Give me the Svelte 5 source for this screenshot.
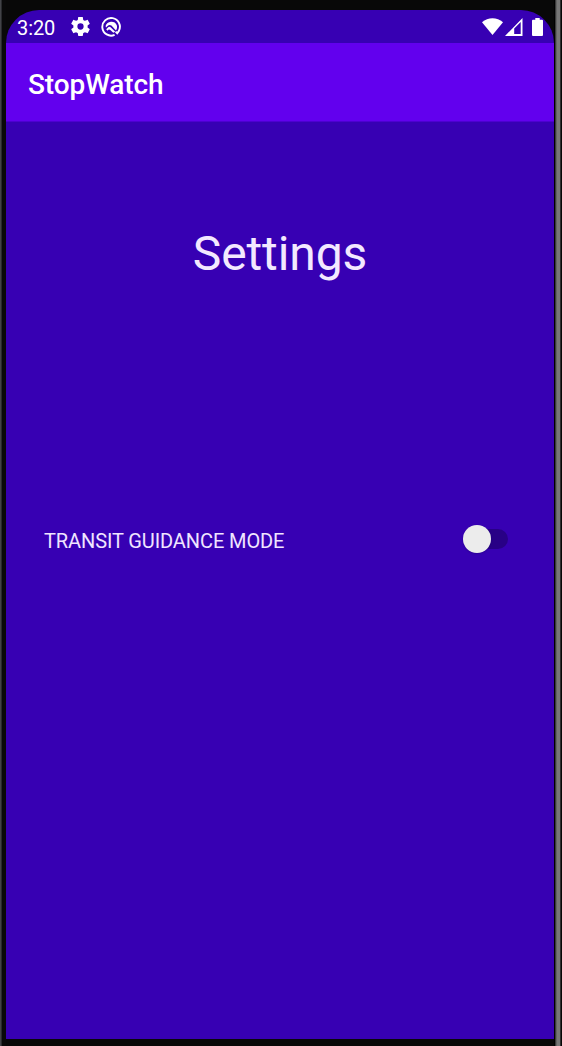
<script>
  let guidance = $state(false);
</script>

<div class="device">
  <div class="screen">
    <div class="status">
      <span class="time">3:20</span>
      <svg class="gear" viewBox="2 2 20 20" width="19" height="19"><path fill="#fff" d="M19.43 12.98c.04-.32.07-.64.07-.98s-.03-.66-.07-.98l2.11-1.65c.19-.15.24-.42.12-.64l-2-3.46c-.12-.22-.39-.3-.61-.22l-2.49 1c-.52-.4-1.08-.73-1.69-.98l-.38-2.65C14.46 2.18 14.25 2 14 2h-4c-.25 0-.46.18-.49.42l-.38 2.65c-.61.25-1.17.59-1.69.98l-2.49-1c-.23-.09-.49 0-.61.22l-2 3.46c-.13.22-.07.49.12.64l2.11 1.65c-.04.32-.07.65-.07.98s.03.66.07.98l-2.11 1.65c-.19.15-.24.42-.12.64l2 3.46c.12.22.39.3.61.22l2.49-1c.52.4 1.08.73 1.69.98l.38 2.65c.03.24.24.42.49.42h4c.25 0 .46-.18.49-.42l.38-2.65c.61-.25 1.17-.59 1.69-.98l2.49 1c.23.09.49 0 .61-.22l2-3.46c.12-.22.07-.49-.12-.64zM12 15.3a3.3 3.3 0 1 1 0-6.6 3.3 3.3 0 0 1 0 6.6z"/></svg>
      <svg class="badge" viewBox="0 0 20 20" width="20" height="20" fill="none" stroke="#fff"><path stroke-width="1.9" d="M13.6 17.9A8.8 8.8 0 1 1 17.9 13.9L16.2 16.2L14.6 14.6"/><path fill="#fff" stroke="none" d="M4.6 9A6 6 0 0 1 15.8 8.2C16.4 10 16 12 15 13.4L10.4 8.6Q8.4 7 6.6 9L5 10.6Z"/><path fill="#fff" stroke="none" d="M5.2 12.2L7.5 10.1Q8.6 9.3 9.6 10.3L14.2 14.8L12.3 15.7L9.3 13Q7.9 11.9 6.4 13.7Z"/></svg>
      <div class="signals">
        <svg viewBox="0 0 21 17" width="21" height="17"><path fill="#fff" d="M0 4.3C6-1.2 15-1.2 21 4.3L10.5 17Z"/></svg>
        <svg class="cell" viewBox="0 0 18 18" width="18" height="18"><path fill="#fff" fill-rule="evenodd" d="M0 18L17.5 0V18ZM9.2 16H15.7V4L9.2 10.6Z"/></svg>
        <svg class="battery" viewBox="0 0 11 18" width="11" height="18"><path fill="#fff" d="M3.3 0H7.7V1.8H10Q11 1.8 11 2.8V17Q11 18 10 18H1Q0 18 0 17V2.8Q0 1.8 1 1.8H3.3Z"/></svg>
      </div>
    </div>
    <header><span>StopWatch</span></header>
    <main>
      <h1>Settings</h1>
      <div class="setting">
        <span class="label">TRANSIT GUIDANCE MODE</span>
        <button class="switch" class:on={guidance} role="switch" aria-checked={guidance} aria-label="TRANSIT GUIDANCE MODE" onclick={() => (guidance = !guidance)}><span class="thumb"></span></button>
      </div>
    </main>
  </div>
</div>

<style>
  .device {
    box-sizing: border-box;
    width: 562px;
    height: 1046px;
    padding: 10px 8px 7px 6px;
    background: linear-gradient(90deg, #424347 0 1px, #292a2d 1px 2px, #090909 2px 6px, #080808 6px 554px, #000 554px 555px, #393939 555px 556px, #636363 556px 557px, #777 557px 560px, #303030 560px 561px, #070707 561px);
    font-family: Roboto, sans-serif;
  }
  .screen {
    height: 1029px;
    overflow: hidden;
    border-radius: 33px 33px 0 0;
    background: #3700b3;
    color: #fff;
  }
  .status {
    box-sizing: border-box;
    display: flex;
    height: 33px;
    padding: 0 11px;
    align-items: center;
  }
  .time {
    width: 54px;
    padding-top: 2px;
    font-size: 20px;
    line-height: 24px;
    letter-spacing: -0.1px;
  }
  .badge { margin-left: 11px; }
  .signals {
    display: flex;
    margin-left: auto;
    align-items: center;
  }
  .cell { margin-left: 2px; }
  .battery { margin-left: 9px; }
  header {
    box-sizing: border-box;
    display: flex;
    align-items: center;
    height: 79px;
    padding: 5px 0 0 22px;
    background: #6200ee;
    border-bottom: 1px solid #4d00d0;
    font-size: 28px;
    font-weight: 500;
    line-height: 36px;
    letter-spacing: -0.1px;
  }
  h1 {
    margin: 102px 0 0;
    font-size: 48px;
    font-weight: 400;
    line-height: 60px;
    letter-spacing: -0.1px;
    color: #f3e9ff;
    text-align: center;
  }
  .setting {
    display: flex;
    height: 40px;
    margin-top: 235px;
    padding: 0 46px 0 38px;
    align-items: center;
    justify-content: space-between;
  }
  .label {
    padding-top: 3px;
    font-size: 20px;
    line-height: 24px;
    letter-spacing: -0.1px;
    color: #f0e5ff;
  }
  .switch {
    display: flex;
    width: 38px;
    height: 20px;
    padding: 0;
    border: 0;
    border-radius: 10px;
    background: #280086;
    align-items: center;
  }
  .thumb {
    flex: none;
    width: 28px;
    height: 28px;
    margin-left: -7px;
    border-radius: 50%;
    background: #ececec;
    box-shadow: 0 1px 2px #16005950;
  }
  .on { justify-content: flex-end; }
</style>
